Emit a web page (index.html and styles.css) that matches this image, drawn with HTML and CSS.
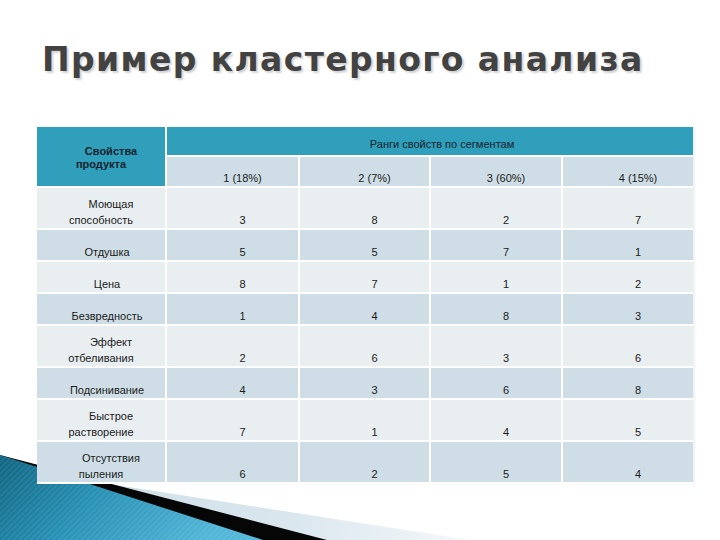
FILE: index.html
```html
<!DOCTYPE html>
<html lang="ru">
<head>
<meta charset="utf-8">
<title>Пример кластерного анализа</title>
<link rel="stylesheet" href="styles.css">
</head>
<body>
<div class="slide">
  <svg class="deco" width="480" height="90" viewBox="0 0 480 90" aria-hidden="true">
    <defs>
      <linearGradient id="lightg" x1="0" y1="0" x2="1" y2="0">
        <stop offset="0" stop-color="#cbdce7"/>
        <stop offset="0.6" stop-color="#d9e6ee"/>
        <stop offset="1" stop-color="#f4f8fa"/>
      </linearGradient>
      <linearGradient id="blueg" x1="0" y1="0" x2="1" y2="0.3">
        <stop offset="0" stop-color="#0e6480"/>
        <stop offset="0.45" stop-color="#2690b4"/>
        <stop offset="1" stop-color="#52b6d8"/>
      </linearGradient>
      <pattern id="stripes" width="4" height="4" patternUnits="userSpaceOnUse" patternTransform="rotate(45)">
        <rect width="2" height="4" fill="#ffffff" fill-opacity="0.07"/>
      </pattern>
    </defs>
    <polygon points="0,17 470,90 0,90" fill="url(#lightg)"/>
    <polygon points="0,5 327,90 0,90" fill="#060606"/>
    <polygon points="0,5 263,90 0,90" fill="url(#blueg)"/>
    <polygon points="0,5 263,90 0,90" fill="url(#stripes)"/>
  </svg>

  <h1 class="title">Пример кластерного анализа</h1>

  <table class="ranks">
    <colgroup>
      <col class="c-prop">
      <col class="c-seg1">
      <col class="c-seg2">
      <col class="c-seg3">
      <col class="c-seg4">
    </colgroup>
    <thead>
      <tr class="h1row">
        <th class="prop-head" rowspan="2"><span class="l1">Свойства</span><span class="l2">продукта</span></th>
        <th class="seg-head" colspan="4">Ранги свойств по сегментам</th>
      </tr>
      <tr class="h2row">
        <th class="seg">1 (18%)</th>
        <th class="seg">2 (7%)</th>
        <th class="seg">3 (60%)</th>
        <th class="seg">4 (15%)</th>
      </tr>
    </thead>
    <tbody>
      <tr class="tall light">
        <td class="name"><span class="l1">Моющая</span><span class="l2">способность</span></td>
        <td>3</td><td>8</td><td>2</td><td>7</td>
      </tr>
      <tr class="short dark">
        <td class="name single">Отдушка</td>
        <td>5</td><td>5</td><td>7</td><td>1</td>
      </tr>
      <tr class="short light">
        <td class="name single">Цена</td>
        <td>8</td><td>7</td><td>1</td><td>2</td>
      </tr>
      <tr class="short dark">
        <td class="name single">Безвредность</td>
        <td>1</td><td>4</td><td>8</td><td>3</td>
      </tr>
      <tr class="tall light">
        <td class="name"><span class="l1">Эффект</span><span class="l2">отбеливания</span></td>
        <td>2</td><td>6</td><td>3</td><td>6</td>
      </tr>
      <tr class="short dark">
        <td class="name single">Подсинивание</td>
        <td>4</td><td>3</td><td>6</td><td>8</td>
      </tr>
      <tr class="tall light">
        <td class="name"><span class="l1">Быстрое</span><span class="l2">растворение</span></td>
        <td>7</td><td>1</td><td>4</td><td>5</td>
      </tr>
      <tr class="tall dark">
        <td class="name"><span class="l1">Отсутствия</span><span class="l2">пыления</span></td>
        <td>6</td><td>2</td><td>5</td><td>4</td>
      </tr>
    </tbody>
  </table>
</div>
</body>
</html>
```

FILE: styles.css
```css
html, body {
  margin: 0;
  padding: 0;
  background: #ffffff;
}

.slide {
  position: relative;
  width: 720px;
  height: 540px;
  overflow: hidden;
  background: #ffffff;
}

.deco {
  position: absolute;
  left: 0;
  bottom: 0;
  display: block;
}

.title {
  margin: 0;
  padding: 39px 0 0 42px;
  font-family: "DejaVu Sans", "Liberation Sans", sans-serif;
  font-weight: bold;
  font-size: 33px;
  line-height: 41px;
  color: #424242;
  text-shadow: 2px 2px 2px rgba(0, 0, 0, 0.18);
  letter-spacing: 1.4px;
}

.ranks {
  position: relative;
  z-index: 1;
  margin: 47px 0 0 37px;
  width: 656px;
  table-layout: fixed;
  border-collapse: separate;
  border-spacing: 0;
  font-family: "Liberation Sans", Arial, sans-serif;
  font-size: 11px;
  color: #1a1a1a;
  box-shadow: 2px 0 2px rgba(0, 0, 0, 0.06);
}

.c-prop { width: 130px; }
.c-seg1 { width: 133px; }
.c-seg2 { width: 131px; }
.c-seg3 { width: 132px; }
.c-seg4 { width: 130px; }

.ranks th,
.ranks td {
  padding: 0 0 0 20px;
  border-right: 2px solid #ffffff;
  border-bottom: 2px solid #ffffff;
  text-align: center;
  vertical-align: bottom;
  line-height: 16px;
  font-weight: normal;
}

.ranks tr > :last-child {
  border-right: none;
}

.h1row { height: 30px; }
.h2row { height: 31px; }
.tall { height: 42px; }
.short { height: 32px; }

.prop-head {
  background: #2f9fbb;
}

.ranks .prop-head {
  padding: 2px 0 0 0;
  vertical-align: middle;
  font-weight: bold;
  color: #17222c;
  line-height: 13px;
}

.ranks .seg-head {
  background: #2f9fbb;
  padding: 0 0 3px 24px;
  color: #17222c;
}

.h2row .seg {
  background: #cfdee6;
}

.light td { background: #e9eef1; }
.dark td { background: #cfdee6; }

.ranks .name {
  padding-left: 0;
}

.ranks .name.single {
  padding-left: 12px;
}

.l1,
.l2 {
  display: block;
}

.l1 {
  padding-left: 20px;
}
```
